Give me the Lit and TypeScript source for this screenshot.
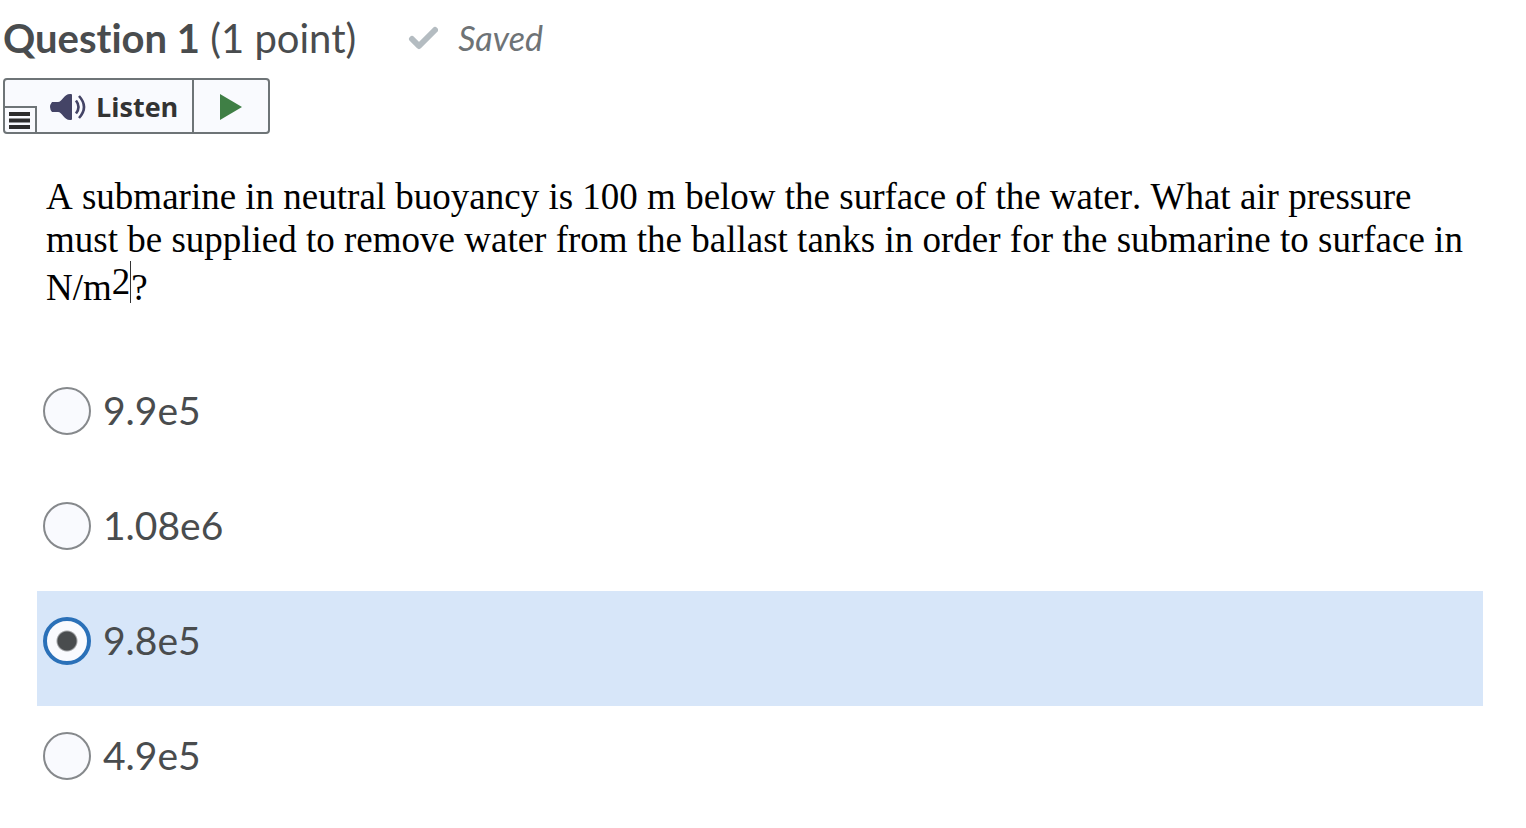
import { LitElement, html, css } from "lit";
import { customElement, state } from "lit/decorators.js";

@customElement("app-root")
export class AppRoot extends LitElement {
  static styles = css`
    :host { display: block; min-height: 100vh; background: #fff; color: #494c4e; font-family: Lato, sans-serif; font-variant-ligatures: none; }
    * { box-sizing: border-box; }
    header { display: flex; align-items: center; padding: 12px 3px 0; height: 64px; }
    h1 { margin: 0; font-size: 40px; line-height: 48px; font-weight: 400; }
    .saved { display: flex; align-items: center; gap: 20px; margin-left: 52px; font-size: 34px; line-height: 48px; font-style: italic; color: #6e7376; }
    .toolbar { display: inline-flex; margin: 14px 3px 0; height: 56px; border: 2px solid #6e7477; border-radius: 4px; background: #f9fafe; overflow: hidden; }
    button { border: 0; padding: 0; background: transparent; display: flex; align-items: center; color: #333; }
    .menu { align-self: flex-end; width: 32px; height: 26px; border-top: 2px solid #6e7477; border-right: 2px solid #6e7477; justify-content: center; padding: 0 2px 0 0; }
    .listen { gap: 10px; padding: 2px 14px 0 13px; font: 700 27px/36px "Open Sans", sans-serif; }
    .play { width: 76px; border-left: 2px solid #6e7477; justify-content: center; padding-top: 2px; }
    .prompt { margin: 41px 43px 0 46px; font: 37px/43px "Liberation Serif", serif; font-kerning: none; color: #000; }
    .prompt p { margin: 0; }
    sup { display: inline-block; border-right: 1px solid #333; vertical-align: 6px; font-size: 37px; line-height: 42px; }
    fieldset { margin: 52px 43px 0 37px; padding: 0; border: 0; min-width: 0; }
    .option { display: flex; align-items: flex-start; gap: 12px; height: 115px; padding: 26px 6px 0; font-size: 39px; line-height: 46px; }
    .option.on { background: #d7e6f9; }
    input { appearance: none; margin: 0; width: 48px; height: 48px; flex: none; border: 2px solid #86898c; border-radius: 50%; background: #f9fafe; }
    input:checked { border: 4px solid #2a70b8; background: radial-gradient(circle, #494c4e 0 9px, #f9fafe 11px); }
  `;

  @state() private selected = "9.8e5";

  render() {
    return html`
      <header>
        <h1><b>Question 1</b> (1 point)</h1>
        <span class="saved">
          <svg width="30" height="24" viewBox="0 0 30 24"><path d="M4 13l7 7L27 4" fill="none" stroke="#b4bcc1" stroke-width="6" stroke-linecap="round" stroke-linejoin="round" /></svg>
          Saved
        </span>
      </header>
      <div class="toolbar">
        <button class="menu" aria-label="Menu"><svg width="21" height="17" viewBox="0 0 21 17"><path d="M0 2h21M0 8.5h21M0 15h21" stroke="#2d2d2d" stroke-width="4" /></svg></button>
        <button class="listen">
          <svg width="36" height="28" viewBox="0 0 36 28">
            <path d="M2 9h6C12 9 14 1 20 1h1q1 0 1 1v24q0 1-1 1h-1C14 27 12 19 8 19H2Q-2 14 2 9z" fill="#444466" />
            <path d="M26 7.500q5 6.500 0 13M29 3q10 11 0 22" fill="none" stroke="#444466" stroke-width="2.600" />
          </svg>Listen
        </button>
        <button class="play" aria-label="Play"><svg width="22" height="26" viewBox="0 0 22 26"><path d="M0 0l22 13L0 26z" fill="#3f7f45" /></svg></button>
      </div>
      <div class="prompt" id="prompt"><p>A submarine in neutral buoyancy is 100 m below the surface of the water. What air pressure must be supplied to remove water from the ballast tanks in order for the submarine to surface in N/m<sup>2</sup>?</p></div>
      <fieldset aria-labelledby="prompt">
        ${["9.9e5", "1.08e6", "9.8e5", "4.9e5"].map((v) => html`
          <div class="option ${v === this.selected ? "on" : ""}">
            <input type="radio" name="answer" id="a-${v}" .checked=${v === this.selected} @change=${() => (this.selected = v)} />
            <label for="a-${v}">${v}</label>
          </div>`)}
      </fieldset>
    `;
  }
}
